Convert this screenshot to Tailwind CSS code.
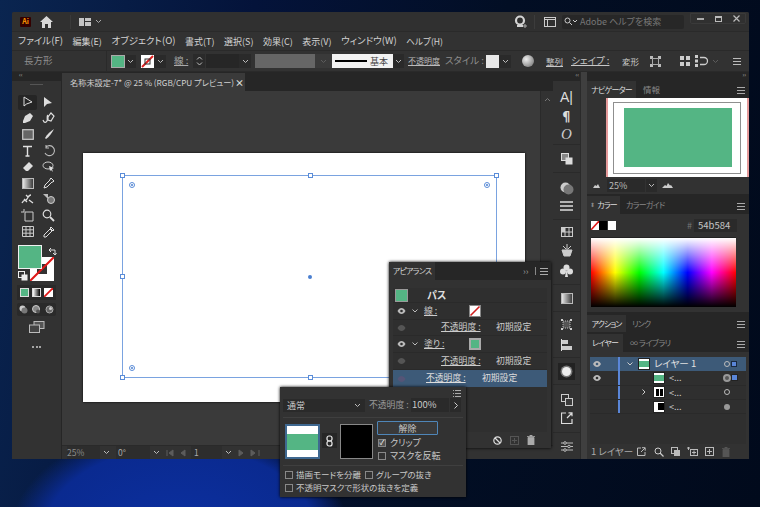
<!DOCTYPE html>
<html lang="ja"><head><meta charset="utf-8">
<script src="https://cdn.jsdelivr.net/npm/@tailwindcss/browser@4"></script>
</head>
<body class="w-[760px] h-[507px] overflow-hidden relative bg-[radial-gradient(ellipse_170px_110px_at_180px_535px,#0c30a0_0%,#0a2a90_80%,transparent_100%),linear-gradient(100deg,#0a2550_0%,#04133a_30%,#020e24_60%,#010a1c_100%)] font-['Noto_Sans_CJK_JP','Noto_Sans',sans-serif] [font-feature-settings:'palt'] text-[10px] leading-none text-[#cccccc]">

<div class="ml-[12px] mt-[12px] w-[737px] h-[447px] bg-[#323232] flex flex-col rounded-t-[2px] overflow-hidden">
  <!-- title bar -->
  <div class="h-[20px] flex items-center border-b border-[#2a2a2a] bg-[#303030] shrink-0">
    <div class="ml-[8px] w-[11px] h-[10px] bg-[#330000] text-[#ff9a00] text-[7px] font-bold flex items-center justify-center rounded-[1px]">Ai</div>
    <svg class="ml-[9px]" width="13" height="12" viewBox="0 0 13 12"><path d="M6.5 0 13 6h-2v6H8V8H5v4H2V6H0z" fill="#d8d8d8"/></svg>
    <div class="ml-[17px] w-px h-[14px] bg-[#3a3a3a]"></div>
    <svg class="ml-[8px]" width="12" height="8" viewBox="0 0 12 8"><path d="M0 0h5v8H0zM6 0h6v3H6zM6 4h6v4H6z" fill="#c4c4c4"/></svg>
    <svg class="ml-[4px]" width="7" height="5" viewBox="0 0 7 5"><path d="M1 1l2.500 2.500L6 1" fill="none" stroke="#aaa" stroke-width="1"/></svg>
    <svg class="ml-[412px]" width="14" height="14" viewBox="0 0 14 14"><circle cx="6" cy="5.500" r="4" fill="none" stroke="#d4d4d4" stroke-width="2.200"/><path d="M3 11h6" stroke="#d4d4d4" stroke-width="2"/><path d="M11 9v4M9 11h4" stroke="#aaa" stroke-width="1"/></svg>
    <div class="ml-[6px] w-px h-[14px] bg-[#3c3c3c]"></div>
    <svg class="ml-[9px]" width="12" height="10" viewBox="0 0 12 10"><rect x=".5" y=".5" width="11" height="9" fill="none" stroke="#ccc"/><path d="M.5 2.500h11M3.500 2.500v7" stroke="#ccc"/></svg>
    <div class="ml-[6px] w-[122px] h-[14px] rounded-[2px] bg-[#272727] flex items-center pl-[2px] text-[#777] text-[9px]">
      <svg width="14" height="9" viewBox="0 0 14 9"><circle cx="3.500" cy="3.500" r="2.500" fill="none" stroke="#ccc"/><path d="M5.500 5.500 8 8M9 3l2 2 2-2" fill="none" stroke="#ccc"/></svg>
      <span class="ml-[2px]">Adobe ヘルプを検索</span>
    </div>
    <div class="ml-[6px] w-[56px] h-[11px] -mt-[6px] border border-[#3a3a3a] rounded-b-[2px] flex items-center justify-around">
      <span class="w-[7px] h-[2px] bg-[#aaa]"></span>
      <span class="w-[7px] h-[6px] border border-[#bbb] border-t-2"></span>
      <svg width="7" height="7" viewBox="0 0 7 7"><path d="M.5.500l6 6M6.500.500l-6 6" stroke="#bbb" stroke-width="1.200"/></svg>
    </div>
  </div>
  <!-- menu -->
  <div class="h-[18px] flex items-center pl-[6px] gap-[9.500px] text-[9.600px] text-[#d2d2d2] shrink-0 whitespace-nowrap">
    <span>ファイル(F)</span><span class="text-[9px]">編集(E)</span><span>オブジェクト(O)</span><span class="text-[9px]">書式(T)</span><span class="text-[9px]">選択(S)</span><span class="text-[9px]">効果(C)</span><span class="text-[9px]">表示(V)</span><span>ウィンドウ(W)</span><span class="text-[8.600px]">ヘルプ(H)</span>
  </div>
  <!-- control bar -->
  <div class="h-[22px] flex items-center border-y border-[#2a2a2a] text-[9.500px] shrink-0 whitespace-nowrap bg-[#323232]">
    <span class="ml-[12px] w-[30px] text-[#8e8e8e]">長方形</span>
    <span class="ml-[52px] w-px h-[20px] bg-[#2a2a2a]"></span>
    <span class="ml-[4px] w-[14px] h-[13px] bg-[#54b584] border border-[#aaa]"></span>
    <span class="w-[11px] h-[13px] bg-[#2a2a2a] flex items-center justify-center"><svg width="7" height="5" viewBox="0 0 7 5"><path d="M1 1l2.500 2.500L6 1" fill="none" stroke="#bbb"/></svg></span>
    <svg class="ml-[5px]" width="13" height="13" viewBox="0 0 13 13"><rect width="13" height="13" fill="#fff"/><path d="M1 12 12 1" stroke="#e02020" stroke-width="2"/><rect x="4" y="4" width="5" height="5" fill="none" stroke="#333"/></svg>
    <span class="w-[12px] h-[13px] bg-[#2a2a2a] flex items-center justify-center"><svg width="7" height="5" viewBox="0 0 7 5"><path d="M1 1l2.500 2.500L6 1" fill="none" stroke="#bbb"/></svg></span>
    <span class="ml-[8px] w-[19px] text-[#aaa] underline">線 :</span>
    <span class="w-[12px] h-[14px] bg-[#2a2a2a] flex flex-col items-center justify-center gap-[2px]"><svg width="7" height="4" viewBox="0 0 7 4"><path d="M1 3.500l2.500-2.500L6 3.500" fill="none" stroke="#bbb"/></svg><svg width="7" height="4" viewBox="0 0 7 4"><path d="M1 .500l2.500 2.500L6 .500" fill="none" stroke="#bbb"/></svg></span>
    <span class="ml-px w-[33px] h-[14px] bg-[#262626]"></span>
    <span class="w-[12px] h-[14px] bg-[#2a2a2a] flex items-center justify-center"><svg width="7" height="5" viewBox="0 0 7 5"><path d="M1 1l2.500 2.500L6 1" fill="none" stroke="#bbb"/></svg></span>
    <span class="ml-[4px] w-[60px] h-[14px] bg-[#666666]"></span>
    <span class="w-[17px] h-[14px] bg-[#3a3a3a] flex items-center justify-center"><svg width="7" height="5" viewBox="0 0 7 5"><path d="M1 1l2.500 2.500L6 1" fill="none" stroke="#5c5c5c"/></svg></span>
    <span class="w-[61px] h-[14px] bg-[#f2f2f2] flex items-center pl-[3px] text-[#444] text-[9px]"><span class="w-[32px] h-[2px] bg-black mr-[3px]"></span>基本</span>
    <span class="w-[11px] h-[14px] bg-[#2a2a2a] flex items-center justify-center"><svg width="7" height="5" viewBox="0 0 7 5"><path d="M1 1l2.500 2.500L6 1" fill="none" stroke="#bbb"/></svg></span>
    <span class="ml-[4px] w-[32px] underline text-[#bbb] text-[8px]">不透明度</span>
    <span class="ml-[5px] w-[41px] text-[#8e8e8e]">スタイル :</span>
    <span class="w-[13px] h-[13px] bg-[#e8e8e8]"></span>
    <span class="w-[12px] h-[13px] bg-[#2a2a2a] flex items-center justify-center"><svg width="7" height="5" viewBox="0 0 7 5"><path d="M1 1l2.500 2.500L6 1" fill="none" stroke="#bbb"/></svg></span>
    <span class="ml-[11px] w-[12px] h-[12px] rounded-full bg-[radial-gradient(circle_at_35%_35%,#eee,#666)]"></span>
    <span class="ml-[12px] w-[17px] text-[#c8c8c8] text-[8.500px] underline">整列</span>
    <span class="ml-[8px] w-[42px] text-[#c8c8c8] underline">シェイプ :</span>
    <span class="ml-[9px] w-[17px] text-[#c8c8c8] text-[8.500px]">変形</span>
    <svg class="ml-[11px]" width="11" height="11" viewBox="0 0 11 11"><path d="M0 0h3v3H0zM8 0h3v3H8zM0 8h3v3H0zM8 8h3v3H8z" fill="#bbb"/><rect x="2.500" y="2.500" width="6" height="6" fill="none" stroke="#aaa"/></svg>
    <svg class="ml-[19px]" width="10" height="10" viewBox="0 0 10 10"><path d="M0 0h4v4H0zM6 0h4v4H6zM0 6h4v4H0zM6 6h4v4H6z" fill="#ccc"/></svg>
    <svg class="ml-[5px]" width="15" height="12" viewBox="0 0 15 12"><path d="M0 0h3v3H0zM0 4.500h3v3H0zM0 9h3v3H0z" fill="#ccc"/><path d="M5 2.500h4a3.500 3.500 0 0 1 0 7H5" fill="none" stroke="#ccc" stroke-width="1.300"/></svg>
    <svg class="ml-[2px]" width="7" height="5" viewBox="0 0 7 5"><path d="M1 1l2.500 2.500L6 1" fill="none" stroke="#5c5c5c"/></svg>
    <svg class="ml-[14px]" width="8" height="7" viewBox="0 0 8 7"><path d="M0 .500h8M0 3.500h8M0 6.500h8" stroke="#bbb"/></svg>
  </div>
  <!-- body -->
  <div class="flex-1 flex min-h-0">
    <!-- tools -->
    <div class="w-[50px] shrink-0 flex flex-col border-r border-[#262626] relative">
      <div class="h-[9px] bg-[#262626] text-[6px] pl-[7px] text-[#aaa]">‹‹</div>
      <div class="mx-auto mt-[3px] w-[13px] h-px bg-[#555]"></div>
      <div class="grid grid-cols-[21px_21px] ml-[5px] mt-[9px] auto-rows-[16.200px] place-items-center">
        <div class="w-[19px] h-[15px] bg-[#252525] rounded-[2px] flex items-center justify-center"><svg width="10" height="12" viewBox="0 0 10 12"><path d="M1 1v9l2.500-2L9 6z" fill="none" stroke="#ddd"/></svg></div>
        <svg width="11" height="12" viewBox="0 0 11 12"><path d="M1 1v10l3-3 5-1z" fill="#ddd"/></svg>
        <svg width="12" height="12" viewBox="0 0 12 12"><path d="M8 1l3 3-3 5-5 2-2 0 0-2 2-5z" fill="#ddd"/></svg>
        <svg width="14" height="12" viewBox="0 0 14 12"><path d="M1 8c1 3 3 3 4 1s-1-5 1-6M9 1l3 3-3 5-3-1 0-3z" fill="none" stroke="#ddd" stroke-width="1.200"/></svg>
        <svg width="12" height="11" viewBox="0 0 12 11"><rect x=".7" y=".7" width="10.600" height="9.600" fill="#666" stroke="#ccc" stroke-width="1.200"/></svg>
        <svg width="12" height="12" viewBox="0 0 12 12"><path d="M11 1C8 3 4 6 2 10l1 1c3-2 6-6 8-10z" fill="#ddd"/></svg>
        <svg width="11" height="12" viewBox="0 0 11 12"><path d="M1 1.500h9M5.500 1.500V11M3.500 11h4" stroke="#e0e0e0" stroke-width="1.400" fill="none"/></svg>
        <svg width="12" height="12" viewBox="0 0 12 12"><path d="M3 2a5 5 0 1 1-1 6M3 0v3h3" fill="none" stroke="#bbb" stroke-width="1.100"/></svg>
        <svg width="12" height="12" viewBox="0 0 12 12"><path d="M7 1l4 4-5 5H4L1 7z" fill="#ddd"/></svg>
        <svg width="14" height="12" viewBox="0 0 14 12"><ellipse cx="6" cy="4.500" rx="5" ry="3.500" fill="none" stroke="#ccc"/><path d="M7 5l5 2-2 1 1 3-2-2-1 1z" fill="#ddd"/></svg>
        <svg width="12" height="11" viewBox="0 0 12 11"><defs><linearGradient id="g1"><stop offset="0" stop-color="#eee"/><stop offset="1" stop-color="#333"/></linearGradient></defs><rect x=".5" y=".5" width="11" height="10" fill="url(#g1)" stroke="#bbb"/></svg>
        <svg width="12" height="12" viewBox="0 0 12 12"><path d="M8 1l3 3-1 1-1 0-5 5-3 1 1-3 5-5 0-1z" fill="none" stroke="#ddd"/></svg>
        <svg width="14" height="12" viewBox="0 0 14 12"><path d="M1 10c2-4 4-2 5-4s2-4 4-4M5 2l2 2M8 7l4 3M3 6l3 3" fill="none" stroke="#ddd" stroke-width="1.300"/></svg>
        <svg width="14" height="12" viewBox="0 0 14 12"><path d="M1 1l5 0 0 5z" fill="#bbb"/><circle cx="9" cy="7" r="3.500" fill="#777" stroke="#ccc"/></svg>
        <svg width="13" height="13" viewBox="0 0 13 13"><path d="M3 0v3M0 3h3M4 3h8v9H4z" fill="none" stroke="#ccc"/></svg>
        <svg width="13" height="13" viewBox="0 0 13 13"><circle cx="5" cy="5" r="3.800" fill="none" stroke="#ddd" stroke-width="1.200"/><path d="M8 8l4 4" stroke="#ddd" stroke-width="1.800"/></svg>
        <svg width="12" height="11" viewBox="0 0 12 11"><path d="M.5.500h11v10H.500zM4 .500v10M8 .500v10M.5 3.800h11M.5 7.200h11" fill="none" stroke="#ccc"/></svg>
        <svg width="12" height="12" viewBox="0 0 12 12"><path d="M7 3l2 2-6 6-2 0 0-2zM8 1l3 3-1 1-3-3z" fill="none" stroke="#ddd"/></svg>
      </div>
      <div class="relative h-[37px] mt-[5px]">
        <div class="absolute left-[6px] top-0 w-[24px] h-[24px] bg-[#54b584] border border-[#f0f0f0] z-10"></div>
        <svg class="absolute left-[18px] top-[12px]" width="24" height="24" viewBox="0 0 24 24"><rect width="24" height="24" fill="#fff"/><rect x="7" y="7" width="10" height="10" fill="#333"/><path d="M0 24 24 0" stroke="#e01818" stroke-width="2"/></svg>
        <svg class="absolute left-[36px] top-[2px] z-10" width="9" height="9" viewBox="0 0 9 9"><path d="M1 3h6v5M7 8l-2-2M7 8l1.500-2M3 1L1 3l2 2" fill="none" stroke="#ddd"/></svg>
        <svg class="absolute left-[6px] top-[26px]" width="10" height="10" viewBox="0 0 10 10"><rect x=".5" y=".5" width="6" height="6" fill="#333" stroke="#eee"/><rect x="3.500" y="3.500" width="6" height="6" fill="#eee"/></svg>
      </div>
      <div class="mx-auto mt-[3px] w-[39px] h-[15px] bg-[#2a2a2a] flex items-center justify-around px-[2px]">
        <span class="w-[9px] h-[9px] bg-[#54b584] border border-[#ddd]"></span>
        <span class="w-[9px] h-[9px] bg-[linear-gradient(to_right,#fff,#000)] border border-[#ddd]"></span>
        <svg width="9" height="9" viewBox="0 0 9 9"><rect width="9" height="9" fill="#fff"/><path d="M0 9 9 0" stroke="#e01818" stroke-width="1.800"/></svg>
      </div>
      <div class="mx-auto mt-[3px] w-[39px] h-[13px] bg-[#2a2a2a] rounded-[2px] flex items-center justify-around">
        <svg width="9" height="9" viewBox="0 0 9 9"><circle cx="3.500" cy="3.500" r="3" fill="#ccc"/><circle cx="5.500" cy="5.500" r="3" fill="#777"/></svg>
        <svg width="9" height="9" viewBox="0 0 9 9"><circle cx="4" cy="4" r="3.500" fill="#888" stroke="#ccc"/><circle cx="6" cy="6.500" r="2" fill="#555"/></svg>
        <svg width="9" height="9" viewBox="0 0 9 9"><circle cx="4.500" cy="4.500" r="3.500" fill="#666" stroke="#aaa"/><circle cx="5.500" cy="3.500" r="1.500" fill="#ccc"/></svg>
      </div>
      <svg class="mx-auto mt-[5px]" width="16" height="12" viewBox="0 0 16 12"><rect x="5" y=".5" width="10" height="7" fill="#555" stroke="#bbb"/><rect x=".5" y="4" width="10" height="7.500" fill="#444" stroke="#bbb"/></svg>
      <div class="mx-auto mt-[13px] flex gap-[1.500px]"><span class="w-[2px] h-[2px] bg-[#ccc] rounded-full"></span><span class="w-[2px] h-[2px] bg-[#ccc] rounded-full"></span><span class="w-[2px] h-[2px] bg-[#ccc] rounded-full"></span></div>
    </div>
    <!-- document -->
    <div class="w-[491px] shrink-0 flex flex-col">
      <div class="h-[19px] bg-[#262626] shrink-0 flex">
        <div class="w-[183px] mt-px h-[18px] bg-[#3a3a3a] flex items-center pl-[8px] text-[8.200px] text-[#cfcfcf] whitespace-nowrap">
          <span class="w-[165px]">名称未設定-7* @ 25 % (RGB/CPU プレビュー)</span>
          <span class="font-bold text-[#ddd] text-[9px]">×</span>
        </div>
      </div>
      <div class="flex-1 flex min-h-0">
        <div class="w-[478px] bg-[#3a3a3a] overflow-hidden">
          <div class="ml-[21px] mt-[62px] w-[442px] h-[249px] bg-white relative shadow-[0_0_2px_#000]">
            <div class="absolute left-[39px] top-[22px] w-[375px] h-[203px] border border-[#7aa3e0]">
              <span class="absolute -left-[3px] -top-[3px] w-[5px] h-[5px] bg-white border border-[#5a8cd8]"></span>
              <span class="absolute left-[185px] -top-[3px] w-[5px] h-[5px] bg-white border border-[#5a8cd8]"></span>
              <span class="absolute -right-[3px] -top-[3px] w-[5px] h-[5px] bg-white border border-[#5a8cd8]"></span>
              <span class="absolute -left-[3px] top-[98px] w-[5px] h-[5px] bg-white border border-[#5a8cd8]"></span>
              <span class="absolute -left-[3px] -bottom-[3px] w-[5px] h-[5px] bg-white border border-[#5a8cd8]"></span>
              <span class="absolute left-[185px] -bottom-[3px] w-[5px] h-[5px] bg-white border border-[#5a8cd8]"></span>
              <span class="absolute left-[185px] top-[99px] w-[4px] h-[4px] rounded-full bg-[#4a7fd0]"></span>
              <span class="absolute left-[6px] top-[6px] w-[6px] h-[6px] rounded-full border border-[#5a8cd8] flex items-center justify-center"><span class="w-[2px] h-[2px] rounded-full bg-[#4a7fd0]"></span></span>
              <span class="absolute right-[6px] top-[6px] w-[6px] h-[6px] rounded-full border border-[#5a8cd8] flex items-center justify-center"><span class="w-[2px] h-[2px] rounded-full bg-[#4a7fd0]"></span></span>
              <span class="absolute left-[6px] bottom-[6px] w-[6px] h-[6px] rounded-full border border-[#5a8cd8] flex items-center justify-center"><span class="w-[2px] h-[2px] rounded-full bg-[#4a7fd0]"></span></span>
            </div>
          </div>
        </div>
        <div class="w-[13px] bg-[#323232] border-l border-[#2a2a2a] flex justify-center pt-[6px]"><svg width="7" height="5" viewBox="0 0 7 5"><path d="M1 4l2.500-2.500L6 4" fill="none" stroke="#777"/></svg></div>
      </div>
      <div class="h-[14px] shrink-0 bg-[#323232] border-t border-[#2a2a2a] flex items-center text-[8.500px] text-[#8c8c8c]">
        <span class="ml-[5px] w-[33px] h-[13px] bg-[#2d2d2d] flex items-center">25%</span>
        <span class="w-[12px] h-[13px] flex items-center justify-center"><svg width="7" height="5" viewBox="0 0 7 5"><path d="M1 1l2.500 2.500L6 1" fill="none" stroke="#bbb"/></svg></span>
        <span class="ml-[4px] w-[34px] h-[13px] bg-[#2d2d2d] flex items-center pl-[2px] text-[#aaa]">0°</span>
        <span class="w-[12px] h-[13px] flex items-center justify-center"><svg width="7" height="5" viewBox="0 0 7 5"><path d="M1 1l2.500 2.500L6 1" fill="none" stroke="#bbb"/></svg></span>
        <svg class="ml-[4px]" width="24" height="8" viewBox="0 0 24 8"><path d="M1 1v6M7 1 3 4l4 3zM19 1l-4 3 4 3z" fill="#5c5c5c" stroke="#5c5c5c"/></svg>
        <span class="ml-[1px] w-[31px] h-[13px] bg-[#2d2d2d] flex items-center pl-[3px] text-[#aaa]">1</span>
        <span class="w-[12px] h-[13px] flex items-center justify-center"><svg width="7" height="5" viewBox="0 0 7 5"><path d="M1 1l2.500 2.500L6 1" fill="none" stroke="#bbb"/></svg></span>
        <svg class="ml-[4px]" width="24" height="8" viewBox="0 0 24 8"><path d="M1 1l4 3-4 3zM13 1l4 3-4 3zM21 1v6" fill="#5c5c5c" stroke="#5c5c5c"/></svg>
      </div>
    </div>
    <!-- icon dock -->
    <div class="w-[27px] shrink-0 flex flex-col items-center">
      <div class="h-[9px] w-full bg-[#262626] text-[6px] text-right text-[#aaa] pr-[1px] shrink-0">‹‹</div>
      <div class="w-full flex flex-col items-center h-[64px] pt-[9px] gap-[3.500px] border-b border-[#2a2a2a]">
        <div class="h-[15px] text-[14px] text-[#ddd] font-['Liberation_Sans']">A|</div>
        <div class="h-[15px] text-[13px] text-[#ddd] font-bold">¶</div>
        <div class="h-[15px] text-[15px] italic text-[#ccc] font-['Liberation_Serif']">O</div>
      </div>
      <div class="w-full h-[28px] flex items-center justify-center border-b border-[#2a2a2a]"><svg width="12" height="12" viewBox="0 0 12 12"><rect x=".5" y=".5" width="7" height="7" fill="#888" stroke="#ddd"/><rect x="4.500" y="4.500" width="7" height="7" fill="#ddd"/></svg></div>
      <div class="w-full h-[47px] flex flex-col items-center justify-end pb-[8px] gap-[6px] border-b border-[#2a2a2a]">
        <svg width="14" height="13" viewBox="0 0 14 13"><circle cx="5.500" cy="5.500" r="5" fill="#ccc"/><circle cx="8.500" cy="7.500" r="5" fill="#777"/></svg>
        <svg width="13" height="10" viewBox="0 0 13 10"><path d="M0 1h13M0 5h13M0 9h13" stroke="#ddd" stroke-width="1.300"/></svg>
      </div>
      <div class="w-full h-[65px] flex flex-col items-center justify-center gap-[7px] border-b border-[#2a2a2a]">
        <svg width="12" height="10" viewBox="0 0 12 10"><rect x=".5" y=".5" width="11" height="9" fill="none" stroke="#ccc"/><path d="M0 5h12M4 0v10M8 0v10" stroke="#ccc"/><rect x="1" y="1" width="3" height="4" fill="#ccc"/></svg>
        <svg width="12" height="13" viewBox="0 0 12 13"><path d="M1 6l2 6h6l2-6zM6 0v6M2 2l3 3M10 2 7 5" fill="#ccc" stroke="#ccc"/></svg>
        <svg width="13" height="13" viewBox="0 0 13 13"><circle cx="6.500" cy="3.500" r="3" fill="#ddd"/><circle cx="3" cy="7.500" r="3" fill="#ddd"/><circle cx="10" cy="7.500" r="3" fill="#ddd"/><path d="M6.500 5 8 13H5z" fill="#ddd"/></svg>
      </div>
      <div class="w-full h-[27px] flex items-center justify-center border-b border-[#2a2a2a]"><svg width="12" height="11" viewBox="0 0 12 11"><rect x=".5" y=".5" width="11" height="10" fill="url(#g1)" stroke="#bbb"/></svg></div>
      <div class="w-full h-[46px] flex flex-col items-center justify-center gap-[9px] border-b border-[#2a2a2a]">
        <svg width="11" height="11" viewBox="0 0 11 11"><path d="M0 0h2v2H0zM9 0h2v2H9zM0 9h2v2H0zM9 9h2v2H9z" fill="#ccc"/><rect x="2" y="2" width="7" height="7" fill="#555" stroke="#bbb" stroke-dasharray="1 1"/></svg>
        <svg width="11" height="12" viewBox="0 0 11 12"><path d="M.5 0v12" stroke="#ddd"/><path d="M1 1h6v4H1zM1 7h10v4H1z" fill="#ccc"/></svg>
      </div>
      <div class="w-full h-[27px] flex items-center justify-center border-b border-[#2a2a2a]"><div class="w-[17px] h-[17px] bg-[#222] flex items-center justify-center"><span class="w-[9px] h-[9px] rounded-full bg-[#eee] shadow-[0_0_0_1.500px_#777]"></span></div></div>
      <div class="w-full h-[48px] flex flex-col items-center justify-center gap-[6px] border-b border-[#2a2a2a]">
        <svg width="12" height="12" viewBox="0 0 12 12"><rect x=".5" y=".5" width="7" height="7" fill="none" stroke="#ccc"/><rect x="4.500" y="4.500" width="7" height="7" fill="#3a3a3a" stroke="#ccc"/></svg>
        <svg width="12" height="12" viewBox="0 0 12 12"><path d="M5 1H.5v10.500H11V7M6 6l5-5M7.500.8H11v3.500" fill="none" stroke="#ddd" stroke-width="1.200"/></svg>
      </div>
      <div class="flex-1 flex items-center"><svg width="12" height="11" viewBox="0 0 12 11"><path d="M0 2h12M0 5.500h12M0 9h12" stroke="#bbb"/><circle cx="4" cy="2" r="1.300" fill="#323232" stroke="#bbb"/><circle cx="8" cy="5.500" r="1.300" fill="#323232" stroke="#bbb"/><circle cx="4" cy="9" r="1.300" fill="#323232" stroke="#bbb"/></svg></div>
    </div>
    <div class="w-[7px] shrink-0 bg-[#3f3f3f] border-l border-[#2a2a2a]"></div>
    <!-- right panels -->
    <div class="w-[162px] shrink-0 flex flex-col bg-[#262626] whitespace-nowrap">
      <div class="h-[9px] text-[6px] text-right pr-[3px] text-[#aaa] shrink-0">››</div>
      <div class="h-[17px] flex items-center relative shrink-0">
        <span class="w-[49px] h-[17px] bg-[#323232] flex items-center justify-center text-[8px] tracking-[-0.800px] text-[#ddd]">ナビゲーター</span>
        <span class="ml-[7px] text-[#888] text-[8.500px]">情報</span>
        <svg class="absolute right-[4px] top-[6px]" width="8" height="7" viewBox="0 0 8 7"><path d="M0 .500h8M0 3.500h8M0 6.500h8" stroke="#aaa"/></svg>
      </div>
      <div class="h-[96px] bg-[#323232] shrink-0 flex flex-col">
        <div class="ml-[19px] w-[143px] h-[79px] bg-white relative border-x-[2px] border-[#e59a9a] shrink-0">
          <div class="absolute left-[5px] top-[4px] w-[128px] h-[72px] border-[1.500px] border-[#8f8f8f]"></div>
          <div class="absolute left-[16px] top-[10px] w-[108px] h-[59px] bg-[#54b584]"></div>
        </div>
        <div class="flex-1 flex items-center">
          <svg class="ml-[6px]" width="7" height="4" viewBox="0 0 7 4"><path d="M0 4l2-3 1.500 1L5 0l2 4z" fill="#ccc"/></svg>
          <span class="ml-[7px] w-[38px] h-[13px] bg-[#2a2a2a] flex items-center pl-[2px] text-[#bbb] text-[9px]">25%</span>
          <span class="ml-px w-[11px] h-[13px] bg-[#2a2a2a] flex items-center justify-center"><svg width="7" height="5" viewBox="0 0 7 5"><path d="M1 1l2.500 2.500L6 1" fill="none" stroke="#bbb"/></svg></span>
          <svg class="ml-[5px]" width="11" height="5" viewBox="0 0 11 5"><path d="M0 5l3-3 1.500 1L6 0l2 2.500L9 2l2 3z" fill="#ccc"/></svg>
        </div>
      </div>
      <div class="h-[18px] mt-[2px] flex items-center relative shrink-0">
        <span class="w-[33px] h-[18px] bg-[#323232] flex items-center pl-[3px] text-[8px] tracking-[-0.800px] text-[#ddd]"><span class="text-[6px] mr-[3px] text-[#888]">⬍</span>カラー</span>
        <span class="ml-[6px] text-[#888] text-[8px] tracking-[-0.800px]">カラーガイド</span>
        <svg class="absolute right-[4px] top-[7px]" width="8" height="7" viewBox="0 0 8 7"><path d="M0 .500h8M0 3.500h8M0 6.500h8" stroke="#aaa"/></svg>
      </div>
      <div class="h-[98px] bg-[#323232] shrink-0 pl-[4px] pt-[5px]">
        <div class="flex items-center h-[13px]">
          <svg width="8" height="9" viewBox="0 0 8 9"><rect width="8" height="9" fill="#fff"/><path d="M0 9 8 0" stroke="#e01818" stroke-width="1.500"/></svg>
          <span class="w-[8px] h-[9px] bg-black"></span>
          <span class="ml-px w-[8px] h-[9px] bg-white"></span>
          <span class="ml-[71px] text-[#777] text-[9px]">#</span>
          <span class="ml-[2px] w-[43px] h-[13px] bg-[#2a2a2a] flex items-center pl-[4px] text-[#c4c4c4] text-[9.500px]">54b584</span>
        </div>
        <div class="mt-[5px] w-[145px] h-[70px] bg-[linear-gradient(to_bottom,#fff,transparent_50%,#000),linear-gradient(to_right,#f00,#ff0,#0f0,#0ff,#00f,#f0f,#f00)] border-t border-[#222]"></div>
      </div>
      <div class="h-[17px] mt-[3px] flex items-center relative shrink-0">
        <span class="w-[39px] h-[17px] bg-[#323232] flex items-center justify-center text-[8px] tracking-[-1px] text-[#ddd]">アクション</span>
        <span class="ml-[6px] text-[#888] text-[8px] tracking-[-0.800px]">リンク</span>
        <svg class="absolute right-[4px] top-[6px]" width="8" height="7" viewBox="0 0 8 7"><path d="M0 .500h8M0 3.500h8M0 6.500h8" stroke="#aaa"/></svg>
      </div>
      <div class="h-[18px] mt-[2px] flex items-center relative shrink-0">
        <span class="w-[36px] h-[18px] bg-[#323232] flex items-center justify-center text-[8px] tracking-[-0.800px] text-[#ddd]">レイヤー</span>
        <span class="ml-[7px] text-[#888] text-[8px] tracking-[-0.500px]">∞ ライブラリ</span>
        <svg class="absolute right-[4px] top-[7px]" width="8" height="7" viewBox="0 0 8 7"><path d="M0 .500h8M0 3.500h8M0 6.500h8" stroke="#aaa"/></svg>
      </div>
      <div class="flex-1 bg-[#323232] pt-[5px] flex flex-col">
        <div class="mx-[3px] h-[87px] bg-[#2f2f2f] text-[9px]">
          <div class="h-[14.300px] bg-[#3d5a78] flex items-center relative">
            <svg class="ml-[3px]" width="8" height="6" viewBox="0 0 8 6"><path d="M0 3c2-4 6-4 8 0-2 4-6 4-8 0z" fill="#bbb"/><circle cx="4" cy="3" r="1.300" fill="#3d5a78"/></svg>
            <span class="ml-[17px] w-[2px] h-full bg-[#5a86d8]"></span>
            <svg class="ml-[7px]" width="6" height="4" viewBox="0 0 6 4"><path d="M.5.500l2.500 2.500L5.500.500" fill="none" stroke="#ccc"/></svg>
            <span class="ml-[5px] w-[12px] h-[12px] bg-white border border-[#222] flex items-center"><span class="w-full h-[6px] bg-[#54b584]"></span></span>
            <span class="ml-[4px] text-[#e0e0e0] text-[9.500px]">レイヤー 1</span>
            <span class="absolute left-[134px] w-[6px] h-[6px] rounded-full border border-[#bbb]"></span>
            <span class="absolute left-[142px] w-[4px] h-[4px] bg-[#5a86d8] shadow-[0_0_0_1px_#1a2a40]"></span>
          </div>
          <div class="h-[14.300px] flex items-center relative border-b border-[#2a2a2a]">
            <svg class="ml-[3px]" width="8" height="6" viewBox="0 0 8 6"><path d="M0 3c2-4 6-4 8 0-2 4-6 4-8 0z" fill="#bbb"/><circle cx="4" cy="3" r="1.300" fill="#2f2f2f"/></svg>
            <span class="ml-[17px] w-[2px] h-full bg-[#5a86d8]"></span>
            <span class="ml-[33px] w-[12px] h-[12px] bg-white border border-[#222] flex items-center"><span class="w-full h-[6px] bg-[#54b584]"></span></span>
            <span class="ml-[4px] text-[#ccc]">&lt;...</span>
            <span class="absolute left-[133px] w-[8px] h-[8px] rounded-full border-2 border-[#999] bg-[#555]"></span>
            <span class="absolute left-[142px] w-[5px] h-[5px] bg-[#5a86d8] shadow-[0_0_0_1px_#222]"></span>
          </div>
          <div class="h-[14.300px] flex items-center relative border-b border-[#2a2a2a]">
            <span class="ml-[28px] w-[2px] h-full bg-[#5a86d8]"></span>
            <svg class="ml-[22px]" width="4" height="6" viewBox="0 0 4 6"><path d="M.5.500 3 3 .5 5.500" fill="none" stroke="#ccc"/></svg>
            <span class="ml-[7px] w-[12px] h-[12px] bg-white border border-[#222] flex items-center justify-center gap-px"><span class="w-[3px] h-[7px] bg-black"></span><span class="w-[3px] h-[7px] bg-black"></span></span>
            <span class="ml-[4px] text-[#ccc]">&lt;...</span>
            <span class="absolute left-[134px] w-[6px] h-[6px] rounded-full border border-[#bbb]"></span>
          </div>
          <div class="h-[14.300px] flex items-center relative border-b border-[#2a2a2a]">
            <span class="ml-[28px] w-[2px] h-full bg-[#5a86d8]"></span>
            <span class="ml-[33px] w-[12px] h-[12px] bg-white border border-[#222] flex items-center justify-end"><span class="w-[6px] h-[7px] bg-black"></span></span>
            <span class="ml-[4px] text-[#ccc]">&lt;...</span>
            <span class="absolute left-[134px] w-[6px] h-[6px] rounded-full bg-[#999]"></span>
          </div>
        </div>
        <div class="flex-1 flex items-center pl-[4px] text-[#aaa] text-[9.500px]">
          <span class="w-[46px]">1 レイヤー</span>
          <svg width="9" height="9" viewBox="0 0 9 9"><path d="M4 1H.5v7.500H8V5M4 5l4-4M5 .7h3.200v3" fill="none" stroke="#bbb"/></svg>
          <svg class="ml-[8px]" width="10" height="10" viewBox="0 0 10 10"><circle cx="4" cy="4" r="3" fill="none" stroke="#ccc"/><path d="M6 6l3.500 3.500" stroke="#ccc" stroke-width="1.300"/></svg>
          <svg class="ml-[7px]" width="9" height="9" viewBox="0 0 9 9"><rect x=".5" y=".5" width="6" height="6" fill="none" stroke="#bbb"/><rect x="3" y="3" width="6" height="6" fill="#bbb"/></svg>
          <svg class="ml-[7px]" width="11" height="9" viewBox="0 0 11 9"><rect x="3.500" y="2.500" width="7" height="6" fill="none" stroke="#bbb"/><path d="M0 1h3M1.500 0v3M7 3.500v4M5 5.500h4" stroke="#bbb"/></svg>
          <svg class="ml-[7px]" width="9" height="9" viewBox="0 0 9 9"><rect x=".5" y=".5" width="8" height="8" fill="none" stroke="#bbb"/><path d="M4.500 2v5M2 4.500h5" stroke="#bbb"/></svg>
          <svg class="ml-[8px]" width="8" height="10" viewBox="0 0 8 10"><path d="M0 1.500h8M3 1.500V0h2v1.500M1 2.500h6V10H1z" fill="#555" stroke="#555" stroke-width=".8"/></svg>
        </div>
      </div>
    </div>
  </div>
</div>

<!-- appearance panel -->
<div class="absolute left-[389px] top-[262px] w-[162px] h-[186px] bg-[#323232] shadow-[0_0_3px_#000] flex flex-col text-[8.800px] whitespace-nowrap">
  <div class="h-[18px] bg-[#262626] flex items-center relative shrink-0">
    <span class="w-[46px] h-[18px] bg-[#323232] flex items-center justify-center text-[8px] tracking-[-0.800px] text-[#ccc]">アピアランス</span>
    <span class="absolute left-[134px] text-[#999] text-[9px]">››</span>
    <span class="absolute left-[146px] w-px h-[8px] bg-[#888]"></span>
    <svg class="absolute right-[3px] top-[6px]" width="8" height="7" viewBox="0 0 8 7"><path d="M0 .500h8M0 3.500h8M0 6.500h8" stroke="#aaa"/></svg>
  </div>
  <div class="mx-[4px] mt-[8px] h-[144px] bg-[#2f2f2f] flex flex-col">
    <div class="h-[15px] flex items-center border-b border-[#2a2a2a]">
      <span class="ml-[2px] w-[13px] h-[13px] bg-[#54b584] border border-[#999]"></span>
      <span class="ml-[19px] font-bold text-[#ddd] text-[10px]">パス</span>
    </div>
    <div class="h-[17px] flex items-center border-b border-[#2a2a2a]">
      <svg class="ml-[4px]" width="9" height="6" viewBox="0 0 8 6"><path d="M0 3c2-4 6-4 8 0-2 4-6 4-8 0z" fill="#bbb"/><circle cx="4" cy="3" r="1.300" fill="#2f2f2f"/></svg>
      <svg class="ml-[6px]" width="6" height="4" viewBox="0 0 6 4"><path d="M.5.500l2.500 2.500L5.500.500" fill="none" stroke="#bbb"/></svg>
      <span class="ml-[6px] w-[45px] text-[#ccc] underline">線 :</span>
      <svg width="12" height="12" viewBox="0 0 12 12"><rect x=".5" y=".5" width="11" height="11" fill="#fff" stroke="#888"/><path d="M1.500 10.500l9-9" stroke="#d02020" stroke-width="1.600"/></svg>
    </div>
    <div class="h-[16px] flex items-center border-b border-[#2a2a2a]">
      <svg class="ml-[4px]" width="9" height="6" viewBox="0 0 8 6"><path d="M0 3c2-4 6-4 8 0-2 4-6 4-8 0z" fill="#555"/></svg>
      <span class="ml-[35px] w-[55px] underline text-[#ccc]">不透明度 :</span>
      <span class="text-[#ccc]">初期設定</span>
    </div>
    <div class="h-[17px] flex items-center border-b border-[#2a2a2a]">
      <svg class="ml-[4px]" width="9" height="6" viewBox="0 0 8 6"><path d="M0 3c2-4 6-4 8 0-2 4-6 4-8 0z" fill="#bbb"/><circle cx="4" cy="3" r="1.300" fill="#2f2f2f"/></svg>
      <svg class="ml-[6px]" width="6" height="4" viewBox="0 0 6 4"><path d="M.5.500l2.500 2.500L5.500.500" fill="none" stroke="#bbb"/></svg>
      <span class="ml-[6px] w-[45px] text-[#ccc] underline">塗り :</span>
      <span class="w-[12px] h-[12px] bg-[#54b584] border-2 border-[#aaa]"></span>
    </div>
    <div class="h-[17px] flex items-center border-b border-[#2a2a2a]">
      <svg class="ml-[4px]" width="9" height="6" viewBox="0 0 8 6"><path d="M0 3c2-4 6-4 8 0-2 4-6 4-8 0z" fill="#555"/></svg>
      <span class="ml-[35px] w-[55px] underline text-[#ccc]">不透明度 :</span>
      <span class="text-[#ccc]">初期設定</span>
    </div>
    <div class="h-[17px] flex items-center bg-[#3d5a78]">
      <svg class="ml-[4px]" width="9" height="6" viewBox="0 0 8 6"><path d="M0 3c2-4 6-4 8 0-2 4-6 4-8 0z" fill="#557"/></svg>
      <span class="ml-[20px] w-[56px] underline text-[#ddd]">不透明度 :</span>
      <span class="text-[#ddd]">初期設定</span>
    </div>
  </div>
  <div class="flex-1 flex items-center justify-end gap-[8px] pr-[16px]">
    <svg width="9" height="9" viewBox="0 0 9 9"><circle cx="4.500" cy="4.500" r="3.700" fill="none" stroke="#ddd" stroke-width="1.200"/><path d="M2 2l5 5" stroke="#ddd" stroke-width="1.200"/></svg>
    <svg width="9" height="9" viewBox="0 0 9 9"><rect x=".5" y=".5" width="8" height="8" fill="none" stroke="#555"/><path d="M4.500 2v5M2 4.500h5" stroke="#555"/></svg>
    <svg width="8" height="10" viewBox="0 0 8 10"><path d="M0 1.500h8M3 1.500V0h2v1.500M1 2.500h6V10H1z" fill="#aaa" stroke="#aaa" stroke-width=".8"/></svg>
  </div>
</div>

<!-- transparency panel -->
<div class="absolute left-[280px] top-[387px] w-[186px] h-[110px] bg-[#323232] shadow-[0_0_3px_#000] text-[9px] text-[#c8c8c8] whitespace-nowrap pt-[11px]">
  <svg class="absolute right-[5px] top-[3px]" width="8" height="7" viewBox="0 0 8 7"><path d="M0 .500h1M2 .500h6M0 3.500h1M2 3.500h6M0 6.500h1M2 6.500h6" stroke="#aaa"/></svg>
  <div class="flex items-center h-[14px] ml-[3px]">
    <span class="w-[82px] h-[13px] bg-[#2a2a2a] flex items-center justify-between px-[4px]">通常<svg width="7" height="5" viewBox="0 0 7 5"><path d="M1 1l2.500 2.500L6 1" fill="none" stroke="#bbb"/></svg></span>
    <span class="ml-[4px] w-[42px] text-[#999] text-[8.800px]">不透明度 :</span>
    <span class="w-[38px] h-[14px] bg-[#2a2a2a] flex items-center pl-[1px] text-[9.500px]">100%</span>
    <span class="ml-px w-[11px] h-[14px] bg-[#2a2a2a] flex items-center justify-center"><svg width="4" height="7" viewBox="0 0 4 7"><path d="M.5.500 3.500 3.500.5 6.500" fill="none" stroke="#ccc"/></svg></span>
  </div>
  <div class="mx-[3px] mt-[5px] h-px bg-[#3f3f3f]"></div>
  <div class="flex mt-[3px] h-[44px]">
    <div class="ml-[5px] mt-[3px] w-[35px] h-[35px] border-2 border-[#3f6890] bg-white flex items-center"><span class="w-full h-[16px] bg-[#54b584]"></span></div>
    <div class="ml-[2px] mt-[12px] w-[15px] h-[15px] bg-[#262626] flex items-center justify-center"><svg width="7" height="12" viewBox="0 0 7 12"><rect x="1" y="1" width="5" height="5" rx="2" fill="none" stroke="#eee" stroke-width="1.200"/><rect x="1" y="6" width="5" height="5" rx="2" fill="none" stroke="#eee" stroke-width="1.200"/></svg></div>
    <div class="ml-[3px] mt-[3px] w-[33px] h-[35px] border border-[#888] bg-black"></div>
    <div class="ml-[4px] flex flex-col">
      <div class="w-[61px] h-[14px] border border-[#4f86b8] rounded-[1px] bg-[#3a3a3a] flex items-center justify-center text-[9px]">解除</div>
      <div class="mt-px h-[13px] flex items-center pl-[1px]"><span class="w-[8px] h-[8px] bg-[#555] border border-[#888] text-[7px] flex items-center justify-center text-white mr-[4px]">✓</span>クリップ</div>
      <div class="h-[13px] flex items-center pl-[1px]"><span class="w-[8px] h-[8px] border border-[#888] mr-[4px]"></span>マスクを反転</div>
    </div>
  </div>
  <div class="mx-[3px] h-px bg-[#3f3f3f]"></div>
  <div class="ml-[5px] mt-[2px] h-[13px] flex items-center text-[8.500px]"><span class="w-[8px] h-[8px] border border-[#888] mr-[3px]"></span><span class="w-[66px]">描画モードを分離</span><span class="ml-[3px] w-[8px] h-[8px] border border-[#888] mr-[3px]"></span>グループの抜き</div>
  <div class="ml-[5px] h-[13px] flex items-center text-[8.500px]"><span class="w-[8px] h-[8px] border border-[#888] mr-[3px]"></span>不透明マスクで形状の抜きを定義</div>
</div>
</body></html>
